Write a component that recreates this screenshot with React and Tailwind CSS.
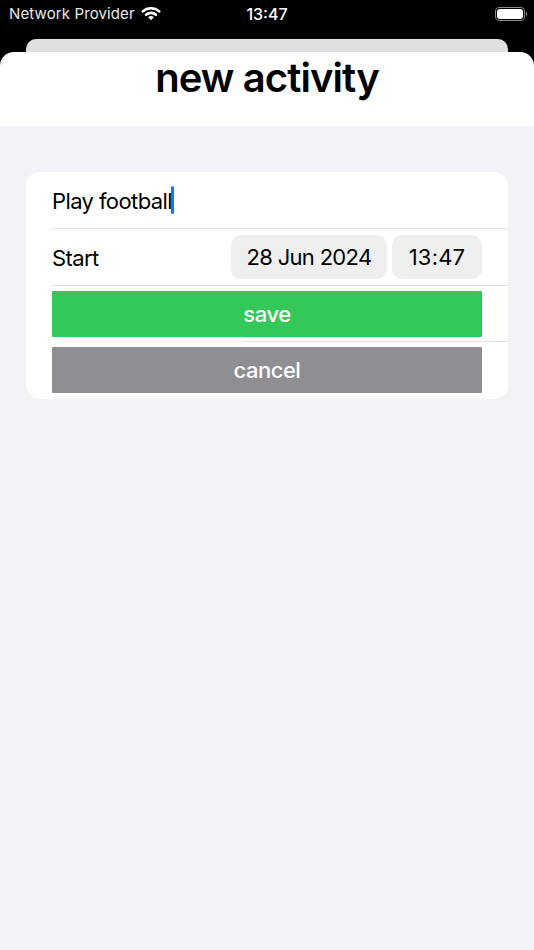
import React from "react";

/* --- status bar icons --- */
const WifiIcon = () => (
  <svg width="20" height="15" viewBox="0 0 20 15" fill="none" className="block -translate-y-[1px]">
    <path d="M1.8 5.4C6.4 1.2 13.6 1.2 18.2 5.4" stroke="white" strokeWidth="2.6" strokeLinecap="round" />
    <path d="M5 8.7C7.8 6.2 12.2 6.2 15 8.7" stroke="white" strokeWidth="2.6" strokeLinecap="round" />
    <path d="M7.2 11.2 10 14.2l2.8-3C11.2 9.7 8.8 9.7 7.2 11.2Z" fill="white" />
  </svg>
);

const BatteryIcon = () => (
  <div className="flex items-center">
    <div className="flex h-[14px] w-[30px] items-center rounded-[4px] border border-[#8a8a8a] p-[1px]">
      <div className="h-full w-full rounded-[3px] bg-white" />
    </div>
    <div className="ml-[1px] h-[4px] w-[1.5px] rounded-r-full bg-[#8a8a8a]" />
  </div>
);

const Pill = ({ children, className }) => (
  <div className={`flex h-[44px] items-center justify-center rounded-[10px] bg-[#efeff0] pt-[1px] text-[22px] text-black ${className}`}>
    {children}
  </div>
);

export default function App() {
  return (
    <div className="flex h-[950px] w-[534px] flex-col overflow-hidden bg-black font-['Inter',sans-serif]">
      {/* ===== STATUS BAR ===== */}
      <div className="grid h-[39px] shrink-0 grid-cols-3 items-center pb-[11px] text-white">
        <div className="flex items-center gap-[6px] pl-[9px] text-[15px] tracking-[0.12px] whitespace-nowrap text-[#e8e8e8]">
          <span>Network Provider</span>
          <WifiIcon />
        </div>
        <div className="text-center text-[16px] font-medium">13:47</div>
        <div className="flex justify-end pr-[7px]">
          <BatteryIcon />
        </div>
      </div>

      {/* ===== SHEET BEHIND ===== */}
      <div className="mx-[26px] h-[13px] shrink-0 rounded-t-[10px] bg-[#e0e0e0]" />

      {/* ===== SHEET ===== */}
      <div className="flex h-[74px] shrink-0 justify-center rounded-t-[14px] bg-white">
        <h1 className="pt-[1px] text-[40px] leading-[50px] font-semibold tracking-[-0.9px] text-black">new activity</h1>
      </div>

      <div className="flex-1 bg-[#f2f2f7] px-[26px] pt-[46px]">
        <div className="h-[227px] rounded-[14px] bg-white pl-[26px] text-[22px] tracking-[-0.6px] text-black">
          <div className="flex h-[57px] items-center border-b border-[#e5e5e8] pt-[2px]">
            <span>Play football</span>
            <span className="ml-[-1px] h-[28px] w-[3px] -translate-y-[1px] rounded-full bg-[#0a7aff]" />
          </div>
          <div className="flex h-[57px] items-center justify-between border-b border-[#e5e5e8] pr-[26px]">
            <span className="pt-[2px]">Start</span>
            <div className="flex gap-[5px]">
              <Pill className="w-[156px] tracking-[-0.7px]">28 Jun 2024</Pill>
              <Pill className="w-[90px] tracking-[0.2px]">13:47</Pill>
            </div>
          </div>
          <div className="pt-[5px] pr-[26px]">
            <button className="flex h-[46px] w-full items-center justify-center rounded-[1px] bg-[#34c759] text-[22px] font-medium tracking-[-0.4px] text-white">
              save
            </button>
          </div>
          <div className="mt-[4px] ml-[191px] border-b border-[#e5e5e8]" />
          <div className="pt-[5px] pr-[26px]">
            <button className="flex h-[46px] w-full items-center justify-center rounded-[1px] bg-[#8e8e93] text-[22px] font-medium tracking-[-0.5px] text-white">
              cancel
            </button>
          </div>
        </div>
      </div>
    </div>
  );
}
